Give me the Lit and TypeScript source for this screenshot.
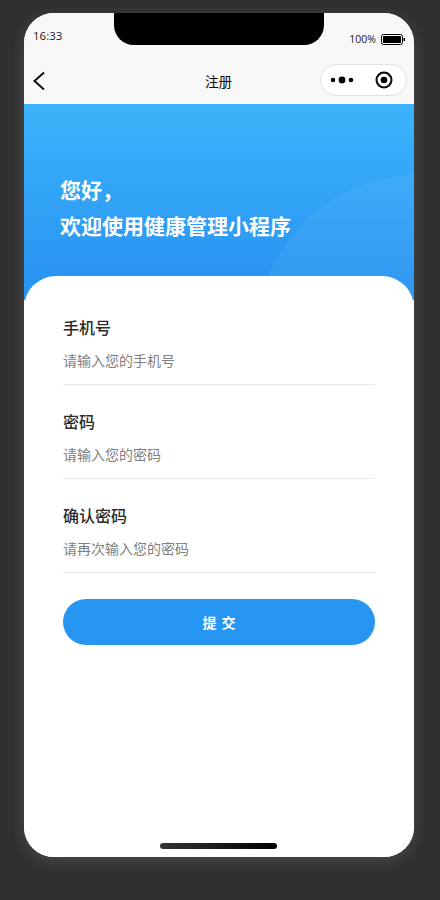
import { LitElement, html, css } from "lit";
import { customElement } from "lit/decorators.js";

const fields = [
  { label: "手机号", hint: "请输入您的手机号" },
  { label: "密码", hint: "请输入您的密码" },
  { label: "确认密码", hint: "请再次输入您的密码" },
];

@customElement("app-root")
export class AppRoot extends LitElement {
  static styles = css`
    :host {
      display: block;
      width: 440px;
      height: 900px;
      background: #303030;
      font-family: "Noto Sans CJK SC", "Liberation Sans", sans-serif;
      overflow: hidden;
      padding: 13px 0 0 24px;
      box-sizing: border-box;
    }
    .phone {
      position: relative;
      width: 390px;
      height: 844px;
      border-radius: 30px;
      background: #fff;
      overflow: hidden;
      display: flex;
      flex-direction: column;
    }
    .shadow {
      width: 390px;
      height: 844px;
      border-radius: 30px;
      box-shadow: 0 4px 16px rgba(255, 255, 255, 0.13);
    }
    .notch {
      position: absolute;
      top: 0;
      left: 90px;
      width: 210px;
      height: 32px;
      background: #000;
      border-radius: 0 0 20px 20px;
    }
    .status {
      height: 44px;
      background: #f8f8f8;
      display: flex;
      justify-content: space-between;
      padding: 0 9px 0 9px;
      box-sizing: border-box;
      color: #222;
    }
    .time {
      font-family: "Open Sans", "Liberation Sans", sans-serif;
      font-size: 11.5px;
      line-height: 16px;
      margin-top: 15px;
    }
    .right {
      display: flex;
      align-items: center;
      gap: 5px;
      height: 16px;
      margin-top: 18px;
      font-family: "Open Sans", "Liberation Sans", sans-serif;
      font-size: 10.5px;
    }
    .nav {
      height: 47px;
      background: #f8f8f8;
      display: grid;
      grid-template-columns: 1fr auto 1fr;
      align-items: center;
      padding: 0 7px 0 8px;
      box-sizing: border-box;
    }
    .back { display: block; }
    .title {
      font-size: 13.5px;
      color: #000;
      padding-right: 2px;
    }
    .capsule {
      justify-self: end;
      width: 87px;
      height: 32px;
      box-sizing: border-box;
      border: 1px solid #e2e2e2;
      border-radius: 16px;
      background: #fff;
      display: flex;
      align-items: center;
      position: relative;
      top: -1px;
    }
    .capsule svg { display: block; flex: none; }
    .hero {
      position: relative;
      height: 196px;
      flex: none;
      background: linear-gradient(180deg, #3bb4fb 0%, #2994f2 90%, #2894f1 100%);
      overflow: hidden;
      padding: 67px 0 0 36px;
      box-sizing: border-box;
      color: #fff;
      font-size: 21px;
      font-weight: 700;
      line-height: 36px;
    }
    .hero p { margin: 0; position: relative; }
    .deco {
      position: absolute;
      border-radius: 50%;
      background: rgba(255, 255, 255, 0.05);
    }
    .deco.big {
      width: 328px;
      height: 328px;
      left: 232px;
      top: 70px;
    }
    .card {
      position: relative;
      margin-top: -24px;
      flex: 1;
      background: #fff;
      border-radius: 32px 32px 0 0;
      padding: 39px 39px 0;
      display: flex;
      flex-direction: column;
    }
    .fields {
      display: flex;
      flex-direction: column;
      gap: 24px;
    }
    .label {
      font-size: 16px;
      font-weight: 500;
      line-height: 24px;
      color: #2a2a2a;
    }
    .hint {
      font-size: 14px;
      line-height: 20px;
      color: #808080;
      margin-top: 11px;
      padding-bottom: 14px;
      border-bottom: 1px solid #e8e8e8;
    }
    .submit {
      display: block;
      width: 100%;
      height: 46px;
      margin-top: 26px;
      border: 0;
      border-radius: 23px;
      background: #2796f3;
      color: #fff;
      font-family: inherit;
      font-size: 14px;
      font-weight: 700;
      letter-spacing: 5px;
      padding: 0 0 0 5px;
    }
    .home {
      position: absolute;
      left: 136px;
      bottom: 8px;
      width: 117px;
      height: 6px;
      border-radius: 3px;
      background: linear-gradient(90deg, #333, #000);
    }
  `;

  render() {
    return html`
      <div class="shadow">
        <div class="phone">
          <div class="status">
            <span class="time">16:33</span>
            <div class="right">
              <span>100%</span>
              <svg width="24" height="11" viewBox="0 0 24 11">
                <rect x="0.5" y="0.5" width="21" height="10" rx="2" fill="none" stroke="#000" />
                <rect x="2" y="2" width="18" height="7" rx="0.5" fill="#000" />
                <rect x="22.5" y="4" width="1.5" height="3" fill="#000" />
              </svg>
            </div>
          </div>
          <div class="nav">
            <svg class="back" width="14" height="20" viewBox="0 0 14 20">
              <path d="M12 1.5 L2.5 10 L12 18.5" fill="none" stroke="#111" stroke-width="2" />
            </svg>
            <div class="title">注册</div>
            <div class="capsule">
              <svg width="85" height="30" viewBox="0 0 85 30">
                <circle cx="12" cy="15" r="2.3" fill="#000" />
                <circle cx="21" cy="15" r="3.4" fill="#000" />
                <circle cx="30" cy="15" r="2.3" fill="#000" />
                <circle cx="63" cy="15" r="7.5" fill="none" stroke="#000" stroke-width="2" />
                <circle cx="63" cy="15" r="3.3" fill="#000" />
              </svg>
            </div>
          </div>
          <div class="hero">
            <div class="deco big"></div>
            <p>您好，</p>
            <p>欢迎使用健康管理小程序</p>
          </div>
          <div class="card">
            <div class="fields">
              ${fields.map(
                (f) => html`
                  <div class="field">
                    <div class="label">${f.label}</div>
                    <div class="hint">${f.hint}</div>
                  </div>
                `
              )}
            </div>
            <button class="submit">提交</button>
          </div>
          <div class="notch"></div>
          <div class="home"></div>
        </div>
      </div>
    `;
  }
}
